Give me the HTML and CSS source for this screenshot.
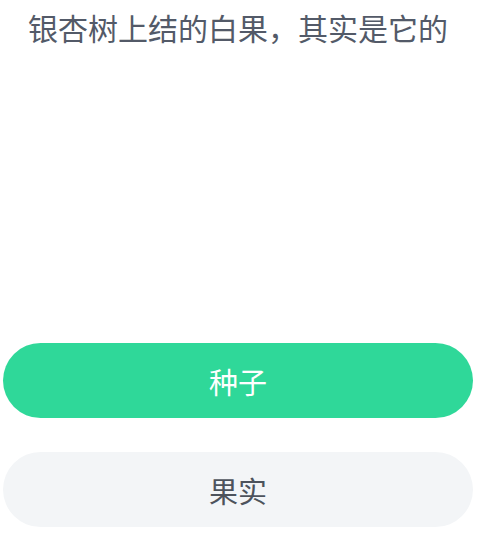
FILE: index.html
```html
<!DOCTYPE html>
<html lang="zh">
<head>
<meta charset="utf-8">
<link rel="stylesheet" href="styles.css">
</head>
<body>
<div class="page">
  <div class="question">银杏树上结的白果，其实是它的</div>
  <div class="options">
    <div class="option option-correct">种子</div>
    <div class="option option-plain">果实</div>
  </div>
</div>
</body>
</html>
```
FILE: styles.css
```css
html, body {
  margin: 0;
  padding: 0;
  background: #ffffff;
}
.page {
  width: 487px;
  height: 533px;
  overflow: hidden;
  font-family: "Noto Sans CJK SC", "Noto Sans", sans-serif;
}
.question {
  padding: 7px 0 0 28px;
  font-size: 30px;
  line-height: 40px;
  color: #535a68;
  white-space: nowrap;
}
.options {
  display: flex;
  flex-direction: column;
  gap: 34px;
  padding: 0 14px 0 3px;
  margin-top: 296px;
}
.option {
  height: 75px;
  border-radius: 38px;
  display: flex;
  align-items: center;
  justify-content: center;
  font-size: 29px;
}
.option-correct {
  background: #2fd899;
  color: #ffffff;
}
.option-plain {
  background: #f3f5f7;
  color: #4d535c;
}
```
